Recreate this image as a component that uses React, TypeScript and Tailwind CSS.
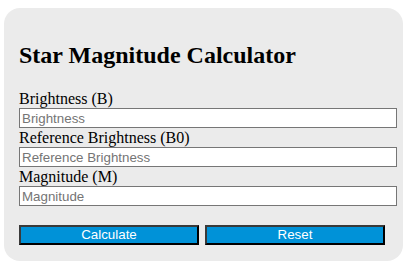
import React from "react";

const fields = [
  { label: "Brightness (B)", placeholder: "Brightness" },
  { label: "Reference Brightness (B0)", placeholder: "Reference Brightness" },
  { label: "Magnitude (M)", placeholder: "Magnitude" },
];

const App: React.FC = () => {
  return (
    <div className="w-[409px] h-[280px] bg-white pt-[8px] pl-[4px]">
      {/* Calculator card */}
      <div className="w-[399px] h-[253px] rounded-[16px] bg-[#ebebeb] pl-[15px] pt-[34px] font-['Liberation_Serif',serif] text-black">
        <h2 className="text-[24px] leading-[27px] font-bold mb-[20px]">Star Magnitude Calculator</h2>

        {fields.map((f) => (
          <div key={f.label}>
            <label className="block h-[19px] text-[16px] leading-[19px]">{f.label}</label>
            <input
              type="text"
              placeholder={f.placeholder}
              className="block w-[378px] h-[20px] bg-white border border-[#767676] px-[2px] text-[13.33px] font-['Liberation_Sans',Arial,sans-serif] placeholder:text-[#757575] outline-none"
            />
          </div>
        ))}

        <div className="flex gap-[6px] mt-[19px]">
          <button className="w-[180px] h-[20px] bg-[#0092d8] text-white text-[13.33px] leading-[16px] font-['Liberation_Sans',Arial,sans-serif] border-2 border-t-[#3a3a3a] border-l-[#3a3a3a] border-b-black border-r-black">
            Calculate
          </button>
          <button className="w-[180px] h-[20px] bg-[#0092d8] text-white text-[13.33px] leading-[16px] font-['Liberation_Sans',Arial,sans-serif] border-2 border-t-[#3a3a3a] border-l-[#3a3a3a] border-b-black border-r-black">
            Reset
          </button>
        </div>
      </div>
    </div>
  );
};

export default App;
